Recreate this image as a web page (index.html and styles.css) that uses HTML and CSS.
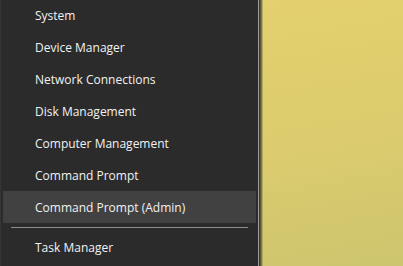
FILE: index.html
```html
<!DOCTYPE html>
<html>
<head>
<meta charset="utf-8">
<link rel="stylesheet" href="styles.css">
</head>
<body>
<div class="screen">
  <nav class="menu">
    <ul class="list">
      <li class="item">System</li>
      <li class="item">Device Manager</li>
      <li class="item">Network Connections</li>
      <li class="item">Disk Management</li>
      <li class="item">Computer Management</li>
      <li class="item">Command Prompt</li>
      <li class="item active">Command Prompt (Admin)</li>
      <li class="sep"></li>
      <li class="item">Task Manager</li>
    </ul>
  </nav>
  <div class="shadow"></div>
  <div class="desktop"></div>
</div>
</body>
</html>
```
FILE: styles.css
```css
html, body {
  margin: 0;
  padding: 0;
  width: 403px;
  height: 266px;
  overflow: hidden;
}
.screen {
  display: flex;
  width: 403px;
  height: 266px;
}
.menu {
  width: 259px;
  flex: none;
  background: #2b2b2b;
  border-left: 1px solid #353535;
  border-right: 1px solid #9c9c9c;
  box-sizing: border-box;
  padding: 0 2px 0 2px;
}
.list {
  list-style: none;
  margin: -1px 0 0 0;
  padding: 0;
}
.item {
  height: 32px;
  display: flex;
  align-items: center;
  padding-left: 32px;
  font-family: "Open Sans", "Noto Sans", sans-serif;
  font-size: 12px;
  color: #f2f2f2;
}
.item.active {
  background: #414141;
}
.sep {
  height: 1px;
  margin: 4px 8px 3px 8px;
  background: #8c8c8c;
}
.shadow {
  width: 4px;
  flex: none;
  background: linear-gradient(to right, #2e2c22, #7a7247 60%, #cfc16a);
}
.desktop {
  flex: 1;
  background: linear-gradient(170deg, #e4d06e 0%, #dccc6d 50%, #cdc56f 100%);
}
```
